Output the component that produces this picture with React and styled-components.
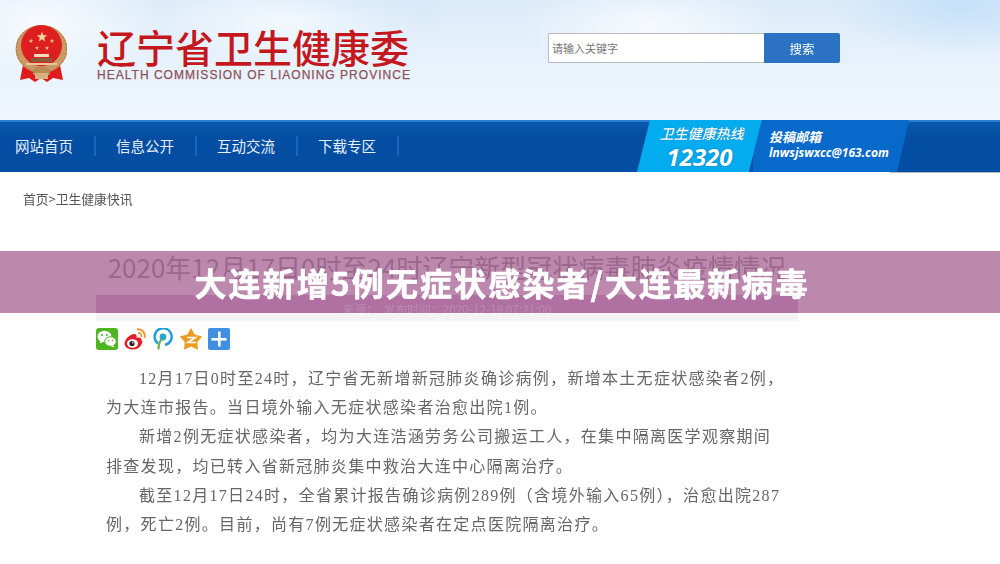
import React from 'react';
import styled, { createGlobalStyle } from 'styled-components';

const GlobalStyle = createGlobalStyle`
    html, body {
        margin: 0;
        padding: 0;
        background: #fff;
    }
`;

const sans = '"Liberation Sans", "Noto Sans CJK SC", sans-serif';
const cjk = '"Noto Sans CJK SC", sans-serif';

const Page = styled.div`
    position: relative;
    width: 1000px;
    height: 564px;
    overflow: hidden;
    background: #fff;
    font-family: ${sans};
`;

const Shot = styled.div`
    filter: blur(0.35px);
`;

const Header = styled.header`
    display: flex;
    align-items: flex-start;
    height: 120px;
    box-sizing: border-box;
    padding: 25px 0 0 15px;
    background:
        radial-gradient(ellipse 130px 60px at 40px 20px, rgba(255, 255, 255, 0.75), transparent),
        radial-gradient(ellipse 140px 40px at 290px 20px, rgba(255, 255, 255, 0.65), transparent),
        radial-gradient(ellipse 110px 40px at 350px 5px, rgba(205, 228, 248, 0.7), transparent),
        radial-gradient(ellipse 130px 45px at 650px 25px, rgba(255, 255, 255, 0.7), transparent),
        radial-gradient(ellipse 130px 50px at 960px 5px, rgba(190, 222, 248, 0.8), transparent),
        linear-gradient(#dcebf9 0, #e6f1fb 45%, #f0f7fe 100%);
`;

const Emblem = styled.svg`
    flex: none;
    width: 52px;
    height: 58px;
`;

const Logo = styled.div`
    margin: 0 0 0 30px;
    width: 320px;
`;

const LogoTitle = styled.div`
    font-family: ${cjk};
    font-size: 39px;
    line-height: 42px;
    font-weight: 500;
    color: #c5181e;
    white-space: nowrap;
`;

const LogoSub = styled.div`
    margin-top: 1px;
    font-size: 12px;
    line-height: 14px;
    font-weight: 400;
    -webkit-text-stroke: 0.25px #8d5158;
    letter-spacing: 1.02px;
    color: #8d5158;
    white-space: nowrap;
`;

const Search = styled.form`
    display: flex;
    margin: 8px 0 0 131px;
    height: 30px;
`;

const SearchInput = styled.input`
    width: 216px;
    height: 30px;
    box-sizing: border-box;
    padding: 0 3px;
    background: #fff;
    border: 1px solid #b9bcc0;
    border-right: none;
    border-radius: 2px 0 0 2px;
    outline: none;
    font-family: ${cjk};
    font-size: 11px;
    &::placeholder {
        color: #777;
        opacity: 1;
    }
`;

const SearchButton = styled.button`
    width: 76px;
    height: 30px;
    padding: 0;
    background: #2b72c2;
    border: none;
    border-radius: 0 2px 2px 0;
    color: #fff;
    font-family: ${cjk};
    font-size: 12.5px;
`;

const Nav = styled.nav`
    position: relative;
    display: flex;
    height: 52px;
    box-sizing: border-box;
    border-top: 2px solid #2a7fd4;
    background: linear-gradient(#0a58ab, #034ea2 30%, #034ea2);
    &::after {
        content: '';
        position: absolute;
        right: 0;
        bottom: -1px;
        width: 110px;
        height: 1px;
        background: #b5b8bd;
    }
`;

const NavItems = styled.div`
    display: flex;
    align-items: center;
    width: 637px;
    padding: 0 0 2px 15px;
    box-sizing: border-box;
`;

const NavItem = styled.a`
    box-sizing: border-box;
    width: 81px;
    margin-right: 20px;
    height: 20px;
    line-height: 20px;
    border-right: 2px solid #1566bd;
    color: #e8f0fa;
    font-family: ${cjk};
    font-size: 14.5px;
    white-space: nowrap;
`;

const Promo = styled.div`
    display: flex;
    margin-top: -2px;
    height: 52px;
`;

const Hotline = styled.div`
    width: 125px;
    display: flex;
    flex-direction: column;
    align-items: center;
    padding-top: 3px;
    box-sizing: border-box;
    background: #02acef;
    clip-path: polygon(13px 0, 100% 0, 112px 100%, 0 100%);
    color: #fff;
    font-style: italic;
`;

const HotlineTitle = styled.div`
    margin-left: 4px;
    font-family: ${cjk};
    font-size: 14px;
    line-height: 20px;
    font-weight: 500;
    text-shadow: 0 0 1px rgba(0, 60, 130, 0.6);
`;

const HotlineNumber = styled.div`
    font-family: "Open Sans", sans-serif;
    font-size: 24px;
    line-height: 27px;
    font-weight: 700;
    text-shadow: 0 0 2px rgba(0, 60, 130, 0.5);
`;

const Mailbox = styled.div`
    width: 160px;
    margin-left: -13px;
    padding: 8px 0 0 20px;
    box-sizing: border-box;
    background: linear-gradient(90deg, #0a52a8 0, #0a52a8 4px, #0769c9 4px);
    clip-path: polygon(13px 0, 100% 0, 148px 100%, 0 100%);
    color: #fff;
    font-style: italic;
    font-weight: 700;
`;

const MailTitle = styled.div`
    font-family: ${cjk};
    font-size: 13px;
    line-height: 17px;
`;

const MailAddress = styled.div`
    font-family: "Open Sans", sans-serif;
    font-size: 12px;
    line-height: 16px;
    white-space: nowrap;
`;

const Crumbs = styled.div`
    height: 54px;
    line-height: 54px;
    padding-left: 23px;
    font-family: ${cjk};
    font-size: 12.8px;
    color: #555;
`;

const Article = styled.main`
    width: 702px;
    margin-left: 96px;
`;

const Title = styled.h1`
    margin: 24px 0 11px;
    height: 34px;
    line-height: 34px;
    text-align: center;
    font-family: ${cjk};
    font-size: 26px;
    font-weight: 400;
    color: #b5b5b5;
    white-space: nowrap;
`;

const Meta = styled.div`
    height: 26px;
    line-height: 28px;
    background: linear-gradient(#e5cae5 0, #e5cae5 18px, #f3f3f3 18px);
    text-align: center;
    font-family: ${cjk};
    font-size: 11.8px;
    color: #fff;
`;

const Share = styled.div`
    display: flex;
    gap: 6px;
    margin: 7px 0 14px;
    height: 22px;
`;

const ShareIcon = styled.svg`
    flex: none;
    width: 22px;
    height: 22px;
`;

const Body = styled.div`
    margin-left: 10px;
    font-family: "Liberation Serif", ${cjk};
    font-size: 16px;
    line-height: 29.2px;
    letter-spacing: 1.3px;
    color: #666;
    white-space: nowrap;
`;

const Line = styled.div`
    padding-left: ${props => (props.$indent ? '33px' : '0')};
`;

const Banner = styled.div`
    position: absolute;
    left: 0;
    top: 251px;
    width: 100%;
    height: 62px;
    box-sizing: border-box;
    padding-left: 4px;
    display: flex;
    align-items: center;
    justify-content: center;
    background: rgba(133, 39, 108, 0.55);
    color: #fff;
    font-family: ${cjk};
    font-size: 32px;
    font-weight: 700;
    letter-spacing: 2.1px;
    -webkit-text-stroke: 0.6px #fff;
    white-space: nowrap;
`;

const lines = [
    [true, '12月17日0时至24时，辽宁省无新增新冠肺炎确诊病例，新增本土无症状感染者2例，'],
    [false, '为大连市报告。当日境外输入无症状感染者治愈出院1例。'],
    [true, '新增2例无症状感染者，均为大连浩涵劳务公司搬运工人，在集中隔离医学观察期间'],
    [false, '排查发现，均已转入省新冠肺炎集中救治大连中心隔离治疗。'],
    [true, '截至12月17日24时，全省累计报告确诊病例289例（含境外输入65例），治愈出院287'],
    [false, '例，死亡2例。目前，尚有7例无症状感染者在定点医院隔离治疗。'],
];

const navLinks = ['网站首页', '信息公开', '互动交流', '下载专区'];

const star = (cx, cy, r, inner = 0.42) => {
    const pts = [];
    for (let i = 0; i < 10; i++) {
        const rad = i % 2 === 0 ? r : r * inner;
        const a = -Math.PI / 2 + (i * Math.PI) / 5;
        pts.push(`${(cx + rad * Math.cos(a)).toFixed(2)},${(cy + rad * Math.sin(a)).toFixed(2)}`);
    }
    return pts.join(' ');
};

const EmblemIcon = () => (
    <Emblem viewBox="0 0 52 58">
        <path d="M8 40 L5 55 L14 53 L20 57 L26 53 L32 57 L38 53 L48 55 L45 40 Z" fill="#e01b1d" />
        <ellipse cx="26.5" cy="24" rx="26" ry="24" fill="#c99a63" />
        <ellipse cx="26.5" cy="24" rx="25" ry="23" fill="none" stroke="#a97a48" strokeWidth="1" strokeDasharray="2 2" />
        <circle cx="26.5" cy="20.5" r="20.5" fill="#de1f1f" />
        <polygon points={star(27, 12, 5.5)} fill="#f2d6a0" />
        <polygon points={star(16, 16, 2.4)} fill="#eec48a" />
        <polygon points={star(37, 16, 2.4)} fill="#eec48a" />
        <polygon points={star(22, 23, 2.2)} fill="#eec48a" />
        <polygon points={star(32, 23, 2.2)} fill="#eec48a" />
        <rect x="19" y="29" width="15" height="3" fill="#f0dcc0" />
        <rect x="16" y="33" width="21" height="4" fill="#8a5a3c" />
        <rect x="11" y="38" width="31" height="2" fill="#e7c79c" />
        <path d="M18 44 Q26 38 35 44 L35 50 L18 50 Z" fill="#b98a55" />
        <rect x="20" y="48" width="13" height="6" fill="#d8b080" />
    </Emblem>
);

const WechatIcon = () => (
    <ShareIcon viewBox="0 0 22 22">
        <rect width="22" height="22" rx="3" fill="#4cb51f" />
        <ellipse cx="8.5" cy="8.5" rx="7" ry="5.8" fill="#fff" />
        <path d="M4.5 12 L3.8 15.5 L8 13.5 Z" fill="#fff" />
        <ellipse cx="14.5" cy="13.5" rx="5.8" ry="4.8" fill="#fff" stroke="#4cb51f" strokeWidth="1" />
        <path d="M17 17 L18.5 19.5 L14.5 18 Z" fill="#fff" />
        <circle cx="6" cy="7" r="1" fill="#4cb51f" />
        <circle cx="11" cy="7" r="1" fill="#4cb51f" />
        <circle cx="12.5" cy="12.5" r="0.8" fill="#4cb51f" />
        <circle cx="16.5" cy="12.5" r="0.8" fill="#4cb51f" />
    </ShareIcon>
);

const WeiboIcon = () => (
    <ShareIcon viewBox="0 0 22 22">
        <path d="M9 21.5 C4 21.5 0.5 19 0.5 15.5 C0.5 11.5 6 6 10 6 C12.5 6 13 8 12.5 10 C15 9 17.5 9.5 17.5 12 C19 13 18.5 15 17.5 16.5 C16 19.5 13 21.5 9 21.5 Z" fill="#e3202a" />
        <ellipse cx="8.5" cy="15.5" rx="5.5" ry="4.2" fill="#fff" />
        <circle cx="8" cy="15.5" r="2.6" fill="#222" />
        <circle cx="8.8" cy="14.8" r="0.8" fill="#fff" />
        <path d="M13 1.5 C18 0.5 22 5 20.5 10" fill="none" stroke="#f0962e" strokeWidth="2" />
        <path d="M14 5 C16.5 4.5 18 7 17.3 9" fill="none" stroke="#f0962e" strokeWidth="1.6" />
    </ShareIcon>
);

const PinIcon = () => (
    <ShareIcon viewBox="0 0 22 22">
        <path d="M6 15.5 A8.5 8.5 0 1 1 13 17" fill="none" stroke="#1f9fd8" strokeWidth="2.4" />
        <circle cx="11" cy="9" r="3.4" fill="#2aa6c9" />
        <path d="M9.5 11.5 C7 14 6.5 18 6.5 21.5" stroke="#6db04a" strokeWidth="2.2" fill="none" />
    </ShareIcon>
);

const QzoneIcon = () => (
    <ShareIcon viewBox="0 0 22 22">
        <polygon points={star(11, 12, 12, 0.55)} fill="#ef9b1f" />
        <path d="M7 9.5 H15 L8 14.5 H16" fill="none" stroke="#fff" strokeWidth="1.7" />
    </ShareIcon>
);

const PlusIcon = () => (
    <ShareIcon viewBox="0 0 22 22">
        <rect width="22" height="22" rx="2" fill="#3f8fe3" />
        <rect x="10" y="3.5" width="2.6" height="15" fill="#fff" />
        <rect x="3.5" y="10" width="15" height="2.6" fill="#fff" />
    </ShareIcon>
);

const App = () => (
    <Page>
        <GlobalStyle />
        <Shot>
            <Header>
                <EmblemIcon />
                <Logo>
                    <LogoTitle>辽宁省卫生健康委</LogoTitle>
                    <LogoSub>HEALTH COMMISSION OF LIAONING PROVINCE</LogoSub>
                </Logo>
                <Search onSubmit={e => e.preventDefault()}>
                    <SearchInput placeholder="请输入关键字" />
                    <SearchButton>搜索</SearchButton>
                </Search>
            </Header>
            <Nav>
                <NavItems>
                    {navLinks.map(link => (
                        <NavItem key={link}>{link}</NavItem>
                    ))}
                </NavItems>
                <Promo>
                    <Hotline>
                        <HotlineTitle>卫生健康热线</HotlineTitle>
                        <HotlineNumber>12320</HotlineNumber>
                    </Hotline>
                    <Mailbox>
                        <MailTitle>投稿邮箱</MailTitle>
                        <MailAddress>lnwsjswxcc@163.com</MailAddress>
                    </Mailbox>
                </Promo>
            </Nav>
            <Crumbs>首页&gt;卫生健康快讯</Crumbs>
            <Article>
                <Title>2020年12月17日0时至24时辽宁新型冠状病毒肺炎疫情情况</Title>
                <Meta>来源：　发布时间：2020-12-18 07:21:00</Meta>
                <Share>
                    <WechatIcon />
                    <WeiboIcon />
                    <PinIcon />
                    <QzoneIcon />
                    <PlusIcon />
                </Share>
                <Body>
                    {lines.map(([indent, text]) => (
                        <Line key={text} $indent={indent}>{text}</Line>
                    ))}
                </Body>
            </Article>
        </Shot>
        <Banner>大连新增5例无症状感染者/大连最新病毒</Banner>
    </Page>
);

export default App;
